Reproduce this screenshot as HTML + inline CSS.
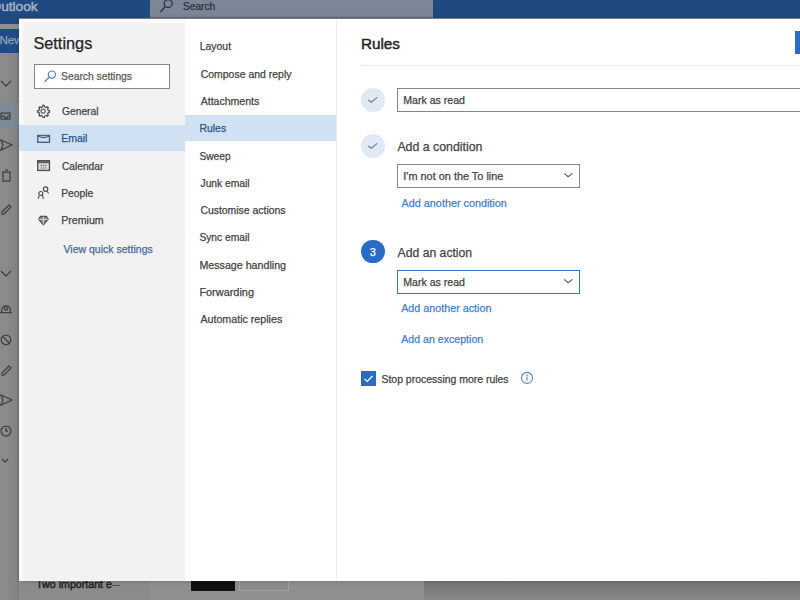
<!DOCTYPE html>
<html><head><meta charset="utf-8">
<style>
*{margin:0;padding:0;box-sizing:border-box}
html,body{width:800px;height:600px;overflow:hidden;background:#8b8b8b;font-family:"Liberation Sans",sans-serif;position:relative}
div,svg{position:absolute;z-index:2}
.t{white-space:nowrap;-webkit-text-stroke:0.25px currentColor}
</style></head><body>
<!-- background app -->
<div style="z-index:1;left:0;top:0;width:800px;height:18px;background:#1f4a80"></div>
<div style="z-index:1;left:150px;top:0;width:283px;height:18px;background:#7b8696;border-bottom:1px solid #5d6878"></div>
<svg style="z-index:1;left:156px;top:-4px" width="20" height="20" viewBox="0 0 20 20"><circle cx="12.2" cy="7.5" r="4" fill="none" stroke="#2d3542" stroke-width="1.3"/><line x1="9.3" y1="10.5" x2="4.5" y2="16" stroke="#2d3542" stroke-width="1.4"/></svg>
<div style="z-index:1;left:0;top:18px;width:19px;height:6px;background:#1f4a84"></div>
<div style="z-index:1;left:0;top:24px;width:19px;height:5px;background:#8e9093"></div>
<div style="z-index:1;left:0;top:29px;width:19px;height:24px;background:#1f4c88"></div>
<div style="z-index:1;left:8px;top:53px;width:11px;height:547px;background:linear-gradient(90deg,#878787 0px,#858585 8px,#7c7c7c 11px)"></div>
<div style="z-index:1;left:0;top:103px;width:19px;height:25px;background:#7e8996"></div>
<!-- left strip icons -->
<svg style="z-index:1;left:0;top:60px" width="19" height="420" viewBox="0 0 19 420" fill="none" stroke="#404040" stroke-width="1.25">
  <polyline points="1,21 6,26 11,21"/>
  <path d="M1 53 h9 v6 h-9 z M1 56 h3 l1 2 h2 l1 -2 h2"/>
  <path d="M1 80 l11 5 l-11 5 l2 -5 z"/>
  <path d="M3 112 h7 v9 h-7 z M2 112 h9 M5 110 h3"/>
  <path d="M2 152 l7 -7 l2 2 l-7 7 l-2 0 z"/>
  <polyline points="1,211 6,216 11,211"/>
  <path d="M0 252.5 h12 M1.5 252 q0 -6.5 4.5 -6.5 q4.5 0 4.5 6.5"/><circle cx="6" cy="248.5" r="1.6"/>
  <circle cx="6" cy="279.8" r="4.8"/><line x1="2.6" y1="276.4" x2="9.4" y2="283.2"/>
  <path d="M2 313 l7 -7 l2 2 l-7 7 l-2 0 z"/>
  <path d="M1 335 l11 5 l-11 5 l2 -5 z"/>
  <circle cx="6" cy="371" r="5"/><path d="M6 368 v3 h2"/>
  <polyline points="2,399 5,402 8,399"/>
</svg>
<div class="t" style="left:0;top:0"></div>
<div style="z-index:1;left:150px;top:575px;width:274px;height:25px;background:#8f8f8f"></div>
<div style="z-index:1;left:424px;top:575px;width:376px;height:25px;background:linear-gradient(#6e6e6e 0px,#747474 6px,#888 25px)"></div>
<div style="z-index:1;left:112px;top:585px;width:8px;height:1px;background:#555"></div>
<div style="z-index:1;left:191px;top:580px;width:44px;height:11px;background:#101010"></div>
<div style="z-index:1;left:239px;top:580px;width:50px;height:11px;border:1px solid #a0a0a0;background:#8d8d8d"></div>

<!-- modal -->
<div style="left:19px;top:19px;width:790px;height:562px;background:#fff;box-shadow:0 0 5px rgba(0,0,0,.22)"></div>
<div style="left:19px;top:19px;width:166px;height:562px;background:#f2f2f2;border-left:4px solid #f9f9f9;border-top:4px solid #f9f9f9"></div>
<div style="left:336px;top:19px;width:1px;height:562px;background:#ededed"></div>
<div style="left:19px;top:125px;width:166px;height:26px;background:#cfe1f3"></div>
<div style="left:185px;top:115px;width:151px;height:26px;background:#cfe1f3"></div>
<!-- search settings box -->
<div style="left:34px;top:64px;width:136px;height:25px;background:#fff;border:1px solid #888"></div>
<svg style="left:40px;top:68px" width="20" height="18" viewBox="0 0 20 18" fill="none" stroke="#5b7fae" stroke-width="1.2"><circle cx="11.9" cy="6.6" r="3.6"/><line x1="9.3" y1="9.3" x2="4.6" y2="13.8"/></svg>
<!-- nav icons -->
<svg style="left:34px;top:100px" width="20" height="130" viewBox="0 0 20 130" fill="none" stroke="#4d4d4d" stroke-width="1.1">
  <circle cx="9.1" cy="11.1" r="2.1"/>
  <path d="M9 5.2 l1.3 0.3 l0.4 1.4 l1.3 0.6 l1.3 -0.7 l1 1 l-0.7 1.3 l0.6 1.3 l1.4 0.4 l0 1.4 l-1.4 0.4 l-0.6 1.3 l0.7 1.3 l-1 1 l-1.3 -0.7 l-1.3 0.6 l-0.4 1.4 l-1.4 0 l-0.4 -1.4 l-1.3 -0.6 l-1.3 0.7 l-1 -1 l0.7 -1.3 l-0.6 -1.3 l-1.4 -0.4 l0 -1.4 l1.4 -0.4 l0.6 -1.3 l-0.7 -1.3 l1 -1 l1.3 0.7 l1.3 -0.6 l0.4 -1.4 z" stroke-width="1.2"/>
  <g stroke="#4a6387" stroke-width="1.4"><rect x="3.7" y="35.5" width="11.8" height="6.8"/><path d="M4 36 q5.6 3.2 11.2 0"/></g>
  <rect x="3.8" y="60.8" width="11.6" height="9.6" stroke-width="1.4"/><rect x="3.8" y="60.8" width="11.6" height="2.2" fill="#666" stroke-width="0.6"/>
  <path d="M5.5 65.5 h8 M5.5 68 h8 M7.3 64 v5.5 M9.6 64 v5.5 M11.9 64 v5.5" stroke-width="0.6" stroke="#777"/>
  <circle cx="11.6" cy="89.1" r="2.2" stroke-width="1.2"/><path d="M13.2 91.2 l1.4 2.3"/>
  <circle cx="6.8" cy="93.5" r="2" stroke-width="1.2"/><path d="M5.2 95.5 l-1 3.3 M8.4 95.5 l1 3.3"/>
  <path d="M4.6 119.3 l1.9 -3 h5.8 l1.9 3 l-4.8 5.6 z" fill="#8a8a8a" stroke-width="1.2"/><path d="M4.6 119.4 h9.6 M9.4 116.5 v8" stroke="#eee" stroke-width="0.7"/>
</svg>
<!-- right pane -->
<div style="left:795px;top:31px;width:10px;height:23px;background:#2b6cc3"></div>
<div style="left:361px;top:65px;width:445px;height:1px;background:#ebebeb"></div>
<div style="left:361px;top:88px;width:24px;height:24px;border-radius:50%;background:#e0e9f4"></div>
<svg style="left:361px;top:88px" width="24" height="24" viewBox="0 0 24 24" fill="none" stroke="#62829f" stroke-width="1.2"><polyline points="7.3,12 10.2,14.3 16.3,9.4"/></svg>
<div style="left:397px;top:88px;width:410px;height:24px;border:1px solid #858585;background:#fff"></div>
<div style="left:361px;top:133.5px;width:24px;height:24px;border-radius:50%;background:#e0e9f4"></div>
<svg style="left:361px;top:133.5px" width="24" height="24" viewBox="0 0 24 24" fill="none" stroke="#62829f" stroke-width="1.2"><polyline points="7.3,12 10.2,14.3 16.3,9.4"/></svg>
<div style="left:397px;top:164px;width:182.5px;height:24px;border:1px solid #888;background:#fff"></div>
<svg style="left:562px;top:170px" width="14" height="10" viewBox="0 0 14 10" fill="none" stroke="#5a5a5a" stroke-width="1.1"><polyline points="2.2,3.3 6.1,6.7 10.5,3.4"/></svg>
<div style="left:361.2px;top:239.7px;width:23.5px;height:23.5px;border-radius:50%;background:#2a6bc5"></div>
<div style="left:397px;top:270px;width:182.5px;height:24px;border:1.6px solid #3d74bc;background:#fff"></div>
<svg style="left:562px;top:276px" width="14" height="10" viewBox="0 0 14 10" fill="none" stroke="#5a5a5a" stroke-width="1.1"><polyline points="2.2,3.3 6.1,6.7 10.5,3.4"/></svg>
<div style="left:361px;top:371px;width:15px;height:15px;background:#2b6cc3"></div>
<svg style="left:361px;top:371px" width="15" height="15" viewBox="0 0 15 15" fill="none" stroke="#fff" stroke-width="1.2"><polyline points="3.5,7.8 6.2,10.5 11.5,5"/></svg>
<svg style="left:520px;top:371px" width="14" height="14" viewBox="0 0 14 14" fill="none" stroke="#5d86b6" stroke-width="1.1"><circle cx="7" cy="6.9" r="5.5"/><line x1="7" y1="5.6" x2="7" y2="9.8"/><circle cx="7" cy="4" r="0.3" fill="#5d86b6"/></svg>
<div class="t" style="z-index:3;left:33.4px;top:34.8px;font-size:16.31px;line-height:16.31px;color:#262626">Settings</div>
<div class="t" style="z-index:3;left:61.1px;top:72.1px;font-size:10.29px;line-height:10.29px;color:#5a5a5a">Search settings</div>
<div class="t" style="z-index:3;left:62.1px;top:106.6px;font-size:10.23px;line-height:10.23px;color:#444">General</div>
<div class="t" style="z-index:3;left:61.2px;top:134.2px;font-size:10.47px;line-height:10.47px;color:#2a5586">Email</div>
<div class="t" style="z-index:3;left:61.9px;top:161.8px;font-size:10.22px;line-height:10.22px;color:#444">Calendar</div>
<div class="t" style="z-index:3;left:61.2px;top:188.9px;font-size:10.3px;line-height:10.3px;color:#444">People</div>
<div class="t" style="z-index:3;left:61.2px;top:214.8px;font-size:10.62px;line-height:10.62px;color:#444">Premium</div>
<div class="t" style="z-index:3;left:63.5px;top:243.9px;font-size:10.53px;line-height:10.53px;color:#4a6c96">View quick settings</div>
<div class="t" style="z-index:3;left:199.7px;top:42.4px;font-size:10.45px;line-height:10.45px;color:#444">Layout</div>
<div class="t" style="z-index:3;left:200.7px;top:69.7px;font-size:10.47px;line-height:10.47px;color:#444">Compose and reply</div>
<div class="t" style="z-index:3;left:200.7px;top:96.0px;font-size:10.56px;line-height:10.56px;color:#444">Attachments</div>
<div class="t" style="z-index:3;left:199.5px;top:124.0px;font-size:10.41px;line-height:10.41px;color:#2a5586">Rules</div>
<div class="t" style="z-index:3;left:199.5px;top:151.5px;font-size:10.17px;line-height:10.17px;color:#444">Sweep</div>
<div class="t" style="z-index:3;left:200.5px;top:178.8px;font-size:10.25px;line-height:10.25px;color:#444">Junk email</div>
<div class="t" style="z-index:3;left:200.4px;top:205.8px;font-size:10.43px;line-height:10.43px;color:#444">Customise actions</div>
<div class="t" style="z-index:3;left:199.4px;top:233.2px;font-size:10.25px;line-height:10.25px;color:#444">Sync email</div>
<div class="t" style="z-index:3;left:199.4px;top:259.5px;font-size:10.68px;line-height:10.68px;color:#444">Message handling</div>
<div class="t" style="z-index:3;left:199.4px;top:286.6px;font-size:10.91px;line-height:10.91px;color:#444">Forwarding</div>
<div class="t" style="z-index:3;left:200.4px;top:313.8px;font-size:10.68px;line-height:10.68px;color:#444">Automatic replies</div>
<div class="t" style="z-index:3;left:360.9px;top:35.8px;font-size:15.27px;line-height:15.27px;color:#262626;-webkit-text-stroke:0.45px #262626">Rules</div>
<div class="t" style="z-index:3;left:403.2px;top:95.0px;font-size:10.58px;line-height:10.58px;color:#444">Mark as read</div>
<div class="t" style="z-index:3;left:397.4px;top:141.0px;font-size:12.35px;line-height:12.35px;color:#444">Add a condition</div>
<div class="t" style="z-index:3;left:403.3px;top:171.0px;font-size:10.91px;line-height:10.91px;color:#444">I&#x27;m not on the To line</div>
<div class="t" style="z-index:3;left:401.6px;top:197.6px;font-size:10.82px;line-height:10.82px;color:#4680c4">Add another condition</div>
<div class="t" style="z-index:3;left:397.6px;top:246.5px;font-size:12.2px;line-height:12.2px;color:#444">Add an action</div>
<div class="t" style="z-index:3;left:403.2px;top:276.5px;font-size:10.58px;line-height:10.58px;color:#444">Mark as read</div>
<div class="t" style="z-index:3;left:401.2px;top:303.4px;font-size:10.75px;line-height:10.75px;color:#4680c4">Add another action</div>
<div class="t" style="z-index:3;left:401.2px;top:333.7px;font-size:10.62px;line-height:10.62px;color:#4680c4">Add an exception</div>
<div class="t" style="z-index:3;left:381.5px;top:375.0px;font-size:10.45px;line-height:10.45px;color:#444">Stop processing more rules</div>
<div class="t" style="z-index:1;left:183.0px;top:2.0px;font-size:10.16px;line-height:10.16px;color:#2a323e">Search</div>
<div class="t" style="z-index:1;left:-9.5px;top:-0.5px;font-size:13.68px;line-height:13.68px;color:#a6b3c6;-webkit-text-stroke:0.45px #a6b3c6">Outlook</div>
<div class="t" style="z-index:1;left:-0.5px;top:35.3px;font-size:11.58px;line-height:11.58px;color:#91a2ba">New</div>
<div class="t" style="z-index:1;left:36.2px;top:578.8px;font-size:10.65px;line-height:10.65px;color:#222;-webkit-text-stroke:0.45px #222">Two important e</div>
<div class="t" style="left:369.8px;top:247.2px;font-size:11px;line-height:11px;color:#fff">3</div>
</body></html>
